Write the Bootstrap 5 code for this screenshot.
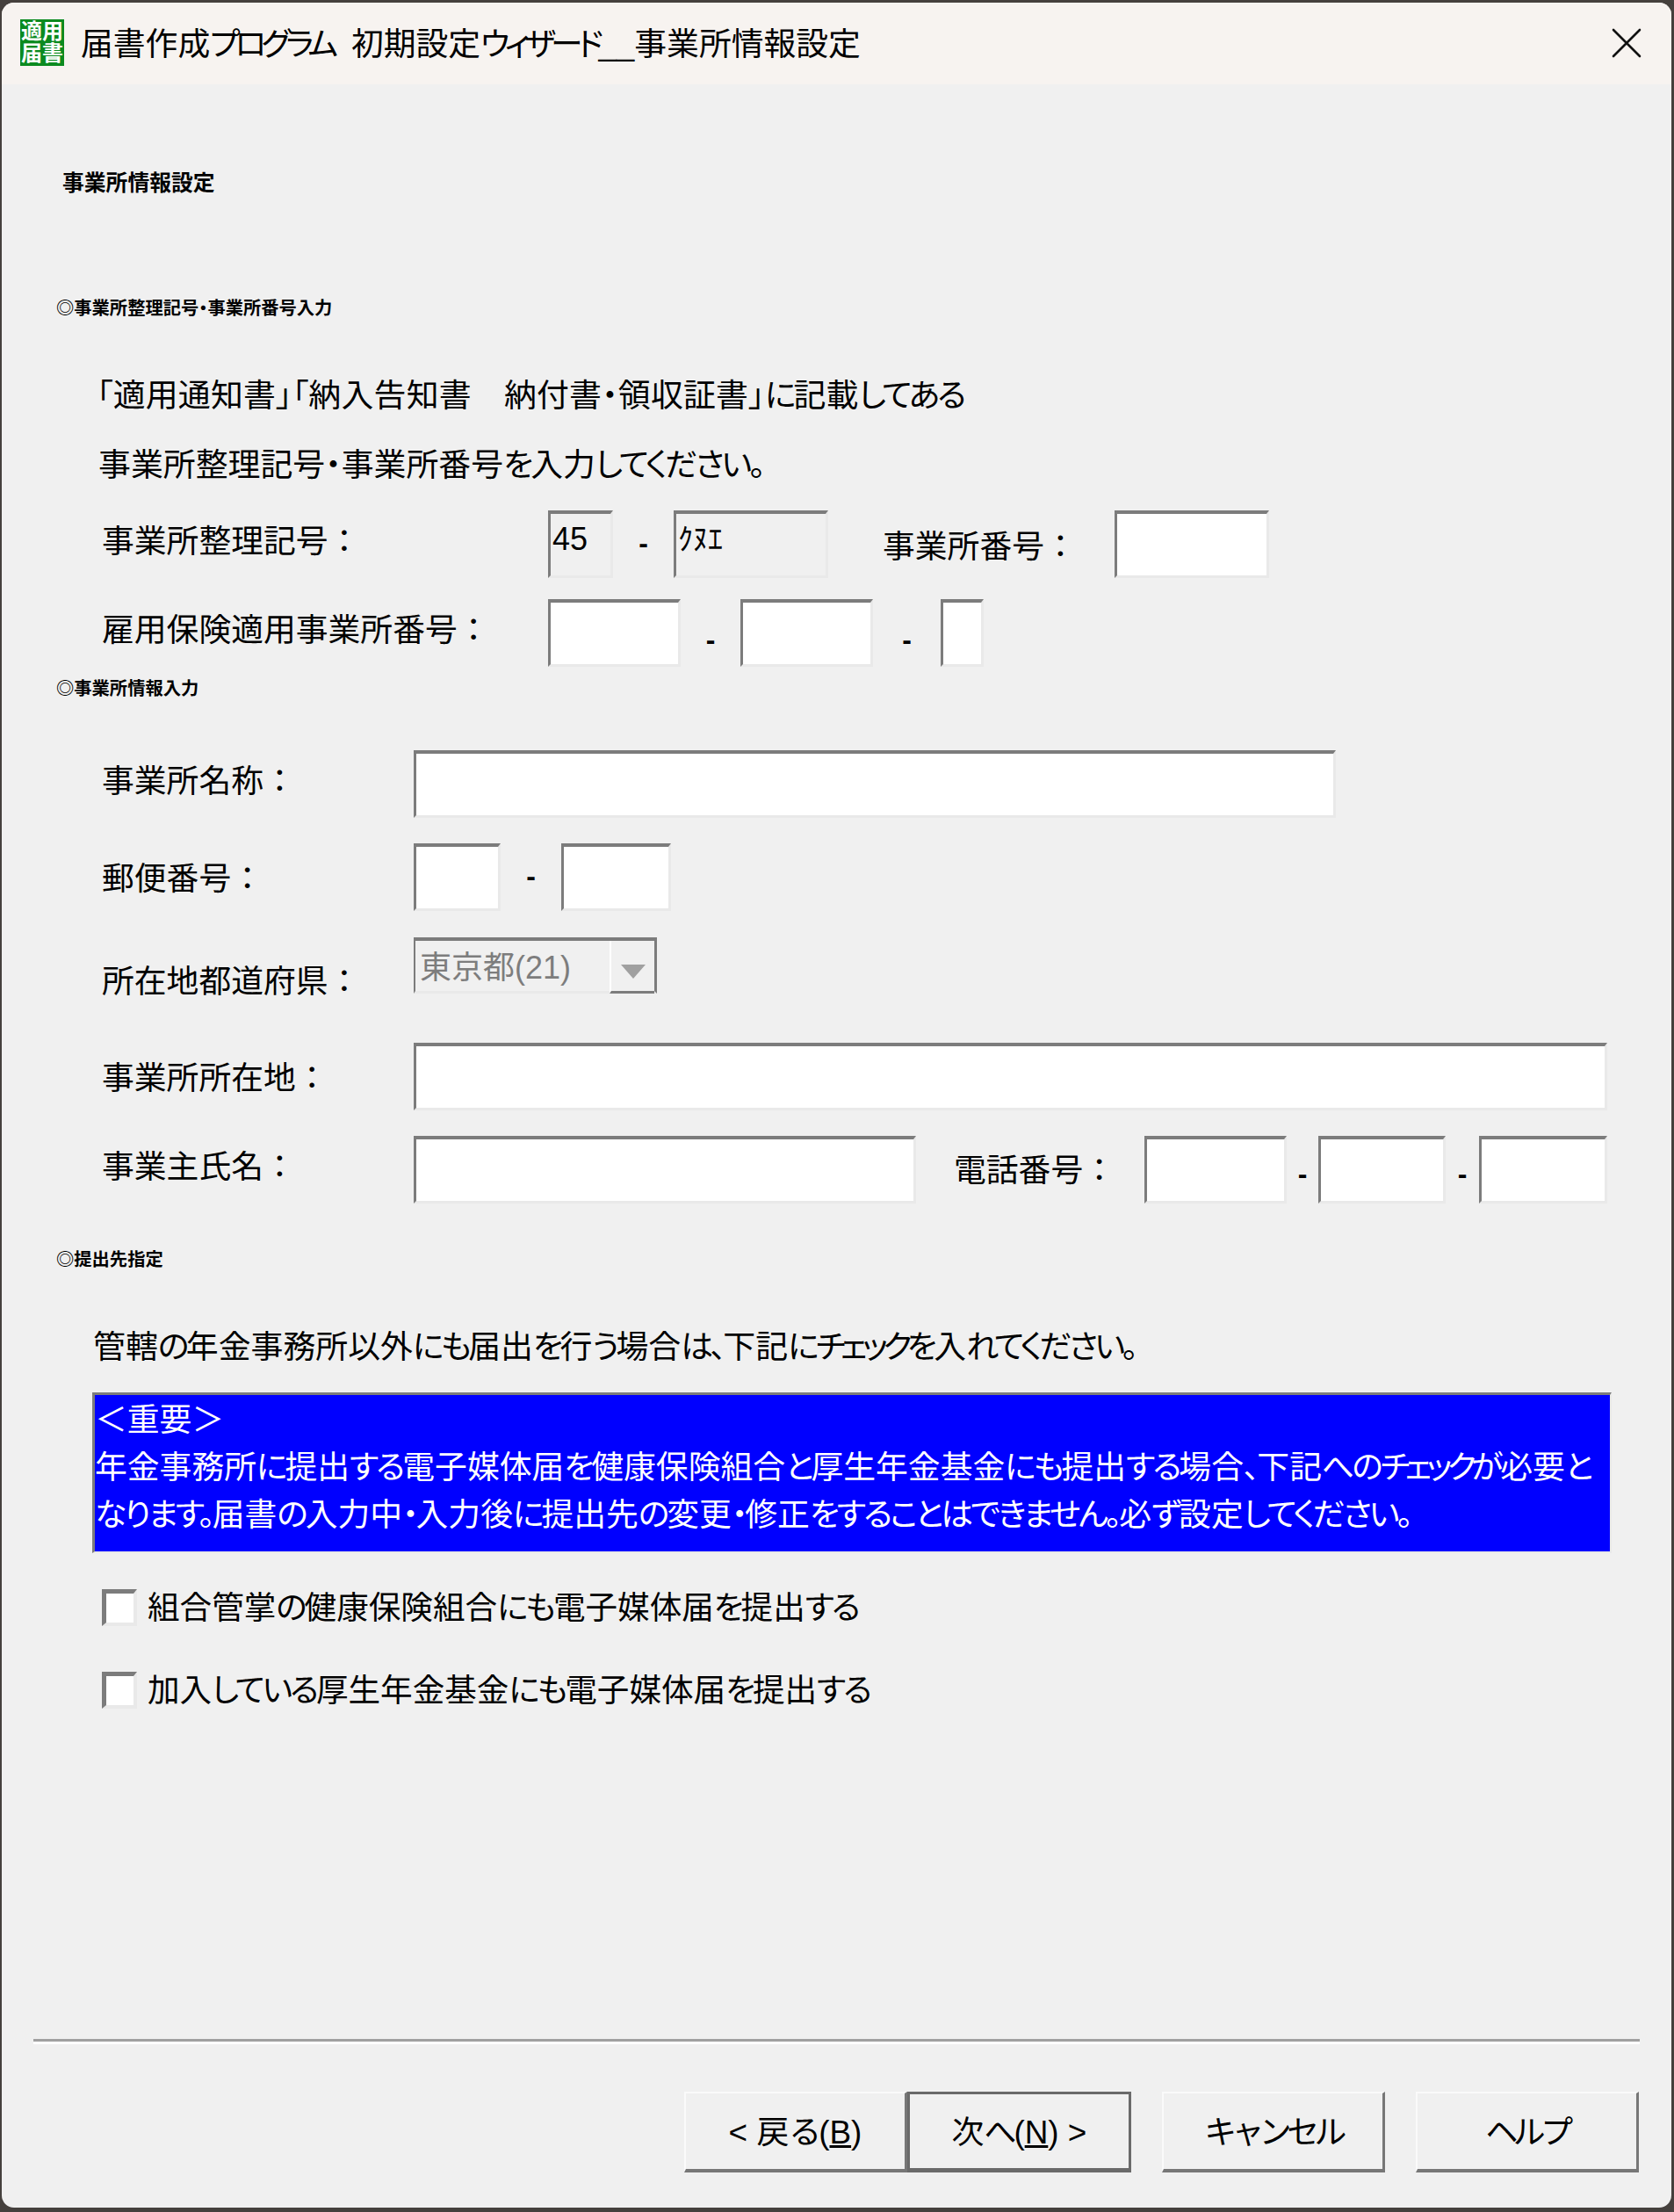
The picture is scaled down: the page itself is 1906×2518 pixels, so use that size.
<!DOCTYPE html>
<html lang="ja">
<head>
  <meta charset="UTF-8">
  <title>届書作成プログラム 初期設定ウィザード__事業所情報設定</title>
  <link href="https://cdn.jsdelivr.net/npm/bootstrap@5.3.0/dist/css/bootstrap.min.css" rel="stylesheet">
  <style>
    html, body { height: 100%; }
    body {
      background: #45403d;
      margin: 0;
      padding: 3px 3px 5px 2px;
      font-family: "Liberation Sans", "Noto Sans CJK JP", sans-serif;
      color: #000;
    }
    .wiz { height: 2510px; background: #f0f0f0; border-radius: 14px; overflow: hidden; font-feature-settings: "palt"; }
    /* the original UI font squeezes kana, these two runs imitate that */
    .kn { letter-spacing: -3px; }
    .kk { letter-spacing: -5.6px; }
    .wiz-title { height: 93px; background: #f7f3f0; padding: 19px 34px 0 21px; }
    .wiz-logo {
      width: 50px; height: 53px; background: #0b8a1f; color: #fff;
      font-size: 24px; line-height: 25px; font-weight: 700; text-align: center; flex: none; padding-top: 1px;
    }
    .wiz-title-text { font-size: 36.8px; line-height: 52px; margin-left: 19px; padding-top: 3px; white-space: pre; }
    .wiz-close { width: 34px; height: 34px; flex: none; margin-top: 10px; }
    .wiz-body { padding: 98px 0 0 0; height: 2417px; }
    .sec-main { font-size: 24.8px; line-height: 30px; font-weight: 700; margin-left: 69px; }
    .sec-sub { font-size: 20.3px; line-height: 24px; font-weight: 700; margin-left: 62px; }
    .txt-big { font-size: 36.9px; line-height: 50px; white-space: nowrap; }
    .lead-a { margin: 63px 0 0 108px; letter-spacing: .2px; }
    .lead-b { margin: 29px 0 0 110px; }
    .lead-c { margin: 63px 0 0 104px; }
    .lead-c .kn { letter-spacing: -3.6px; }
    .sub-a { margin-top: 115px; }
    .sub-b { margin-top: 13px; }
    .sub-c { margin-top: 52px; }
    .row-win { height: 77px; align-items: center; font-size: 36.8px; line-height: 50px; }
    .row-win label { white-space: nowrap; font-feature-settings: normal; }
    .row-gap-a { margin-top: 26px; }
    .row-gap-b { margin-top: 24px; }
    .row-gap-c { margin-top: 58px; }
    .row-gap-d { margin-top: 29px; }
    .row-gap-e { margin-top: 30px; }
    .row-gap-f { margin-top: 56px; }
    .lbl-a { width: 508px; margin-left: 114px; flex: none; padding-bottom: 6px; }
    .lbl-b { width: 355px; margin-left: 114px; flex: none; padding-bottom: 6px; }
    .lbl-low { padding-bottom: 0; padding-top: 26px; }
    .lbl-mid { padding-bottom: 0; padding-top: 4px; }
    .lbl-post { padding-bottom: 0; padding-top: 4px; }
    .lbl-tel { width: 217px; margin-left: 43px; flex: none; padding-top: 3px; }
    .lbl-no { width: 264px; margin-left: 62px; flex: none; padding-top: 6px; }
    .fld {
      flex: none; height: 77px; padding: 0 0 12px 2px;
      font-size: 36px; line-height: 50px;
      background: #fff; color: #000;
      border-style: solid; border-radius: 0;
      border-width: 4px 3px 3px 3px;
      border-color: #7c7c7c #e9e9e9 #e9e9e9 #7c7c7c;
      font-family: inherit;
    }
    .fld[readonly] { background: #f0f0f0; }
    .fld-kana { font-size: 34px; padding-bottom: 18px; }
    .w-74 { width: 74px; }
    .w-176 { width: 176px; }
    .w-151 { width: 151px; }
    .w-49 { width: 49px; }
    .w-99 { width: 99px; }
    .w-125 { width: 125px; }
    .w-1050 { width: 1050px; }
    .w-1359 { width: 1359px; }
    .w-572 { width: 572px; }
    .w-162 { width: 162px; }
    .w-145 { width: 145px; }
    .w-146 { width: 146px; }
    .dash { flex: none; text-align: center; font-size: 32px; font-weight: 700; }
    .dash-69 { width: 69px; padding-bottom: 4px; }
    .dash-68 { width: 68px; padding-top: 14px; }
    .dash-77 { width: 77px; padding-top: 14px; }
    .dash-69b { width: 69px; padding-bottom: 4px; }
    .dash-38 { width: 38px; padding-top: 8px; }
    .dash-36 { width: 36px; padding-top: 8px; }
    .fld-combo {
      width: 277px; height: 64px; flex: none; background: #f0f0f0; color: #7d7d7d;
      border-style: solid; border-width: 4px 3px 3px 2px;
      border-color: #7c7c7c #7c7c7c #e9e9e9 #7c7c7c;
      font-size: 36px; line-height: 50px; padding-left: 5px;
    }
    .combo-val { padding-top: 6px; }
    .combo-btn {
      width: 51px; flex: none; margin-left: auto; border-left: 2px solid #fff;
      border-bottom: 3px solid #7c7c7c; padding-top: 8px; text-align: center; height: 60px;
    }
    .row-combo { height: 64px; align-items: flex-start; }
    .notice {
      margin: 26px 0 0 103px; width: 1730px; height: 183px;
      background: #0000ff; color: #fff;
      border-style: solid; border-width: 3px 2px 2px 3px;
      border-color: #7c7c7c #e9e9e9 #e9e9e9 #7c7c7c;
      font-size: 36.8px; line-height: 54px; padding: 2px 0 0 0; white-space: nowrap;
    }
    .chk-row { margin: 0 0 0 114px; padding: 0; min-height: 0; align-items: center; font-size: 36.6px; line-height: 50px; }
    .chk-row label { padding-top: 3px; }
    .chk-a { margin-top: 35px; }
    .chk-b { margin-top: 41px; }
    .chk-row .form-check-input {
      float: none; width: 40px; height: 42px; margin: 0 12px 0 0; flex: none;
      background: #fff; border-radius: 0; border-style: solid;
      border-width: 5px 4px 4px 5px;
      border-color: #7c7c7c #e9e9e9 #e9e9e9 #7c7c7c;
    }
    .foot-sep { margin: 0 0 0 36px; width: 1829px; border-top: 3px solid #a0a0a0; border-bottom: 3px solid #fff; height: 6px; }
    .foot-btns { padding: 54px 38px 0 777px; }
    .foot-btn {
      width: 254px; height: 92px; padding: 4px 0 0 0; flex: none;
      background: #f0f0f0; color: #000; border-radius: 0;
      border-style: solid; border-width: 2px 3px 4px 2px;
      border-color: #fafafa #777 #777 #fafafa;
      font-size: 36.9px; line-height: 50px;
    }
    .foot-btn:hover { background: #f0f0f0; color: #000; border-color: #fafafa #777 #777 #fafafa; }
    .foot-btn-def { border-color: #6a6a6a; border-width: 3px 3px 5px 3px; width: 255px; }
    .foot-btn-def:hover { border-color: #6a6a6a; }
    .gap-35 { margin-left: 35px; }
    .foot-spacer { height: 371px; }
  </style>
</head>
<body>
  <div class="wiz d-flex flex-column">
    <div class="wiz-title d-flex">
      <div class="wiz-logo">適用<br>届書</div>
      <div class="wiz-title-text flex-grow-1">届書作成<span class="kk">プログラム</span>  初期設定<span class="kk">ウィザード</span>__事業所情報設定</div>
      <svg class="wiz-close" viewBox="0 0 34 34"><path d="M2 2 L32 32 M32 2 L2 32" stroke="#111" stroke-width="2.6" stroke-linecap="round"/></svg>
    </div>

    <div class="wiz-body">
      <div class="sec-main">事業所情報設定</div>
      <div class="sec-sub sub-a">◎事業所整理記号・事業所番号入力</div>
      <div class="txt-big lead-a">「適用通知書」「納入告知書　納付書・領収証書」<span class="kn">に</span>記載<span class="kn">してある</span></div>
      <div class="txt-big lead-b">事業所整理記号・事業所番号<span class="kn">を</span>入力<span class="kn">してください。</span></div>

      <div class="row-win d-flex row-gap-a">
        <label class="lbl-a">事業所整理記号：</label>
        <input class="form-control fld w-74" type="text" value="45" readonly>
        <span class="dash dash-69">-</span>
        <input class="form-control fld fld-kana w-176" type="text" value="ｸﾇｴ" readonly>
        <label class="lbl-no">事業所番号：</label>
        <input class="form-control fld w-176" type="text">
      </div>
      <div class="row-win d-flex row-gap-b">
        <label class="lbl-a">雇用保険適用事業所番号：</label>
        <input class="form-control fld w-151" type="text">
        <span class="dash dash-68">-</span>
        <input class="form-control fld w-151" type="text">
        <span class="dash dash-77">-</span>
        <input class="form-control fld w-49" type="text">
      </div>

      <div class="sec-sub sub-b">◎事業所情報入力</div>

      <div class="row-win d-flex row-gap-c">
        <label class="lbl-b">事業所名称：</label>
        <input class="form-control fld w-1050" type="text">
      </div>
      <div class="row-win d-flex row-gap-d">
        <label class="lbl-b lbl-post">郵便番号：</label>
        <input class="form-control fld w-99" type="text">
        <span class="dash dash-69b">-</span>
        <input class="form-control fld w-125" type="text">
      </div>
      <div class="row-win row-combo d-flex row-gap-e">
        <label class="lbl-b lbl-low">所在地都道府県：</label>
        <div class="fld-combo d-flex">
          <span class="combo-val">東京都(21)</span>
          <span class="combo-btn"><svg width="30" height="18" viewBox="0 0 30 18"><path d="M1 1 H29 L15 17 Z" fill="#a0a0a0"/></svg></span>
        </div>
      </div>
      <div class="row-win d-flex row-gap-f">
        <label class="lbl-b lbl-mid">事業所所在地：</label>
        <input class="form-control fld w-1359" type="text">
      </div>
      <div class="row-win d-flex row-gap-d">
        <label class="lbl-b">事業主氏名：</label>
        <input class="form-control fld w-572" type="text">
        <label class="lbl-tel">電話番号：</label>
        <input class="form-control fld w-162" type="text">
        <span class="dash dash-36">-</span>
        <input class="form-control fld w-145" type="text">
        <span class="dash dash-38">-</span>
        <input class="form-control fld w-146" type="text">
      </div>

      <div class="sec-sub sub-c">◎提出先指定</div>
      <div class="txt-big lead-c">管轄<span class="kn">の</span>年金事務所以外<span class="kn">にも</span>届出<span class="kn">を</span>行<span class="kn">う</span>場合<span class="kn">は、</span>下記<span class="kn">に</span><span class="kk">チェック</span><span class="kn">を</span>入<span class="kn">れてください。</span></div>

      <div class="notice">＜重要＞<br>年金事務所<span class="kn">に</span>提出<span class="kn">する</span>電子媒体届<span class="kn">を</span>健康保険組合<span class="kn">と</span>厚生年金基金<span class="kn">にも</span>提出<span class="kn">する</span>場合<span class="kn">、</span>下記<span class="kn">への</span><span class="kk">チェック</span><span class="kn">が</span>必要<span class="kn">と</span><br><span class="kn">なります。</span>届書<span class="kn">の</span>入力中<span class="kn">・</span>入力後<span class="kn">に</span>提出先<span class="kn">の</span>変更<span class="kn">・</span>修正<span class="kn">をすることはできません。</span>必<span class="kn">ず</span>設定<span class="kn">してください。</span></div>

      <div class="form-check d-flex chk-row chk-a">
        <input class="form-check-input" type="checkbox" id="chkKenpo">
        <label class="form-check-label" for="chkKenpo">組合管掌<span class="kn">の</span>健康保険組合<span class="kn">にも</span>電子媒体届<span class="kn">を</span>提出<span class="kn">する</span></label>
      </div>
      <div class="form-check d-flex chk-row chk-b">
        <input class="form-check-input" type="checkbox" id="chkKikin">
        <label class="form-check-label" for="chkKikin">加入<span class="kn">している</span>厚生年金基金<span class="kn">にも</span>電子媒体届<span class="kn">を</span>提出<span class="kn">する</span></label>
      </div>

      <div class="foot-spacer"></div>
      <div class="foot-sep"></div>
      <div class="foot-btns d-flex">
        <button class="btn foot-btn" type="button">&lt; 戻<span class="kn">る</span>(<u>B</u>)</button>
        <button class="btn foot-btn foot-btn-def" type="button">次<span class="kn">へ</span>(<u>N</u>) &gt;</button>
        <button class="btn foot-btn gap-35" type="button"><span class="kk">キャンセル</span></button>
        <button class="btn foot-btn gap-35" type="button"><span class="kk">ヘルプ</span></button>
      </div>
    </div>
  </div>
  <script src="https://cdn.jsdelivr.net/npm/bootstrap@5.3.0/dist/js/bootstrap.bundle.min.js"></script>
</body>
</html>
